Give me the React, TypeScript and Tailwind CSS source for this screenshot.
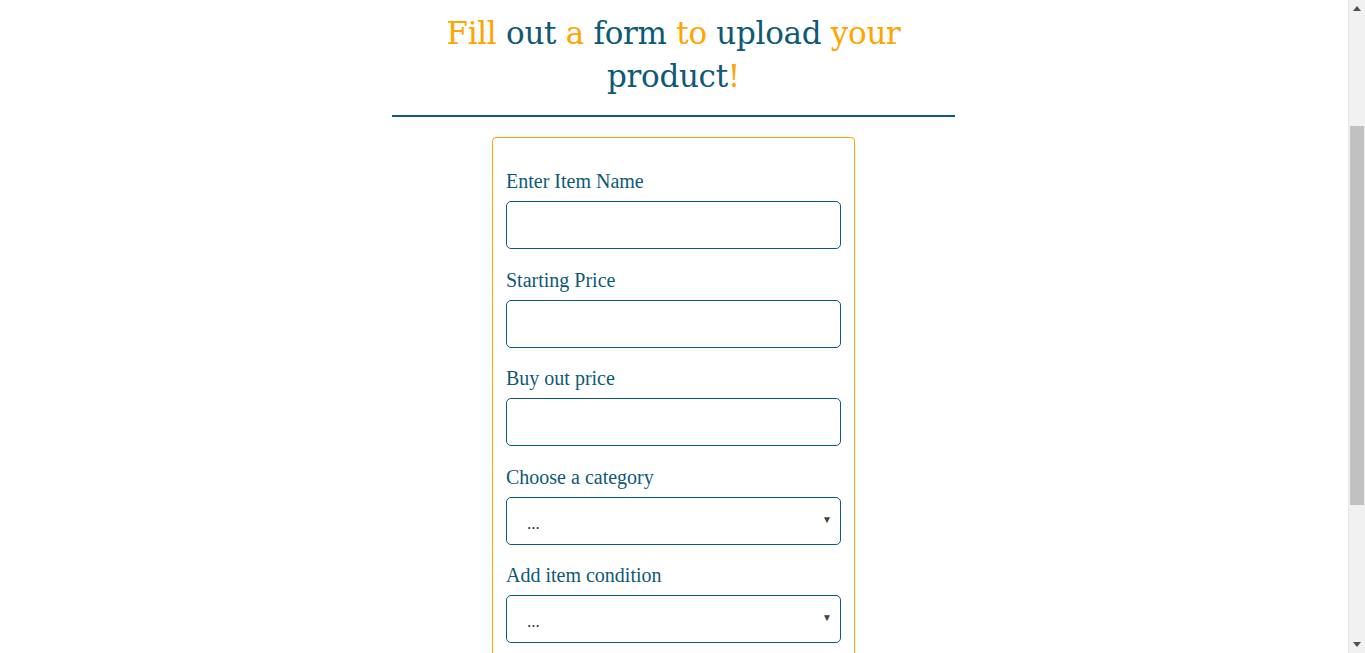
import React, { useEffect, useRef } from 'react';

const teal = 'text-[#0e5a75]';

const Field: React.FC<{ label: string; children: React.ReactNode }> = ({ label, children }) => (
  <div className="flex flex-col">
    <label className={`text-[20px] leading-[23px] ${teal} mb-[8px]`}>{label}</label>
    {children}
  </div>
);

const TextInput: React.FC<{ type?: string }> = ({ type = 'text' }) => (
  <input
    type={type}
    className="h-[48px] w-full rounded-[5px] border border-[#0e5a75] bg-white px-3 text-[18px] outline-none"
  />
);

const Select: React.FC<{ options: string[] }> = ({ options }) => (
  <div className="relative">
    <select className="h-[48px] w-full appearance-none rounded-[5px] border border-[#0e5a75] bg-white pl-[20px] pt-[6px] text-[17px] text-[#333] outline-none">
      <option>...</option>
      {options.map((o) => (
        <option key={o}>{o}</option>
      ))}
    </select>
    {/* dropdown arrow */}
    <span className="pointer-events-none absolute right-[9px] top-[18px] text-[10px] leading-none text-[#444]">▼</span>
  </div>
);

// classic window scrollbar, drawn since the headless page hides its own
const FakeScrollbar = () => (
  <div className="flex w-[17px] shrink-0 flex-col border-l border-[#e8e8e8] bg-[#f1f1f1]">
    <div className="flex h-[17px] items-center justify-center">
      <svg width="8" height="5" viewBox="0 0 8 5">
        <path d="M4 0 L8 5 L0 5 Z" fill="#505050" />
      </svg>
    </div>
    <div className="flex-1 px-[1px] pt-[109px]">
      <div className="h-[379px] bg-[#c1c1c1]" />
    </div>
    <div className="flex h-[17px] items-center justify-center">
      <svg width="8" height="5" viewBox="0 0 8 5">
        <path d="M0 0 L8 0 L4 5 Z" fill="#505050" />
      </svg>
    </div>
  </div>
);

export default function App() {
  const scroller = useRef<HTMLDivElement>(null);

  useEffect(() => {
    if (scroller.current) scroller.current.scrollTop = 178;
  }, []);

  return (
    <div className="flex h-[653px] overflow-hidden bg-white">
      <div
        ref={scroller}
        className="flex-1 overflow-y-auto [scrollbar-width:none]"
        style={{ fontFamily: '"Liberation Serif", "Times New Roman", serif' }}
      >
        {/* header area above the fold */}
        <header className="h-[190px] bg-white" />

        <main className="flex flex-col items-center pb-[40px] pr-[1px]">
          <div className="w-[563px] border-b-2 border-[#0e5a75] pb-[17px] text-center">
            <h1
              className="text-[31px] leading-[43px] tracking-[-0.3px] text-[#0e5a75]"
              style={{ fontFamily: '"DejaVu Serif", Georgia, serif' }}
            >
              <span className="text-[#ffa500]">Fill</span> out <span className="text-[#ffa500]">a</span> form{' '}
              <span className="text-[#ffa500]">to</span> upload <span className="text-[#ffa500]">your</span> product
              <span className="text-[#ffa500]">!</span>
            </h1>
          </div>

          <form className="mt-[20px] flex w-[363px] flex-col gap-[19.5px] rounded-[4px] border border-[#ffa500] px-[13px] pb-[20px] pt-[32px]">
            <Field label="Enter Item Name">
              <TextInput />
            </Field>
            <Field label="Starting Price">
              <TextInput type="number" />
            </Field>
            <Field label="Buy out price">
              <TextInput type="number" />
            </Field>
            <Field label="Choose a category">
              <Select options={['Electronics', 'Clothing', 'Home', 'Sports']} />
            </Field>
            <Field label="Add item condition">
              <Select options={['New', 'Used', 'Refurbished']} />
            </Field>
            <Field label="Upload an image">
              <TextInput type="file" />
            </Field>
            <button
              type="button"
              className="mt-[4px] h-[48px] rounded-[5px] bg-[#0e5a75] text-[18px] text-white"
            >
              Submit
            </button>
          </form>
        </main>
      </div>
      <FakeScrollbar />
    </div>
  );
}
